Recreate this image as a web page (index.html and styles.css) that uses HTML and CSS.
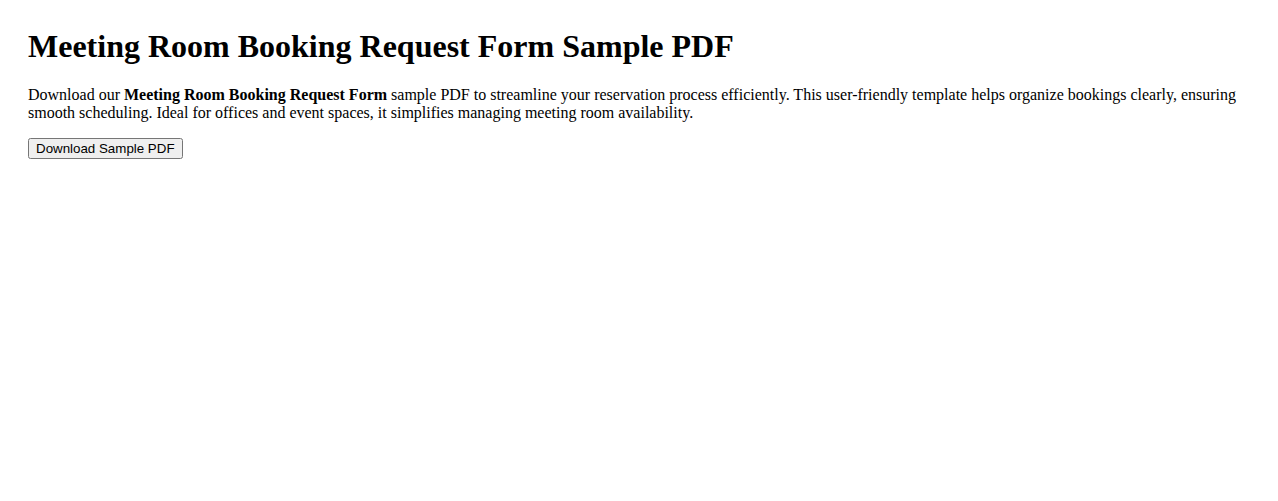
FILE: index.html
```html
<html>
	<head>
		<title>Meeting Room Booking Request Form Sample PDF</title>
		<meta charset="utf-8" />
		<link rel="stylesheet" href="styles.css">
	</head>
	<body>
		<h1 class="header">Meeting Room Booking Request Form Sample PDF</h1>
		<p class="intro">Download our <strong>Meeting Room Booking Request Form</strong> sample PDF to streamline your reservation process efficiently. This user-friendly template helps organize bookings clearly, ensuring smooth scheduling. Ideal for offices and event spaces, it simplifies managing meeting room availability.</p>
		<button class="download">Download Sample PDF</button>
	</body>
</html>
```

FILE: styles.css
```css
body {
	font-family: "Liberation Serif", "Times New Roman", serif;
	padding: 20px;
	color: #000;
	background: #fff;
}
.header {
	font-size: 32px;
	margin-top: 0;
}
.intro {
	font-size: 16px;
}
.download {
	font-family: "Liberation Sans", Arial, sans-serif;
	font-size: 13.333px;
}
```
